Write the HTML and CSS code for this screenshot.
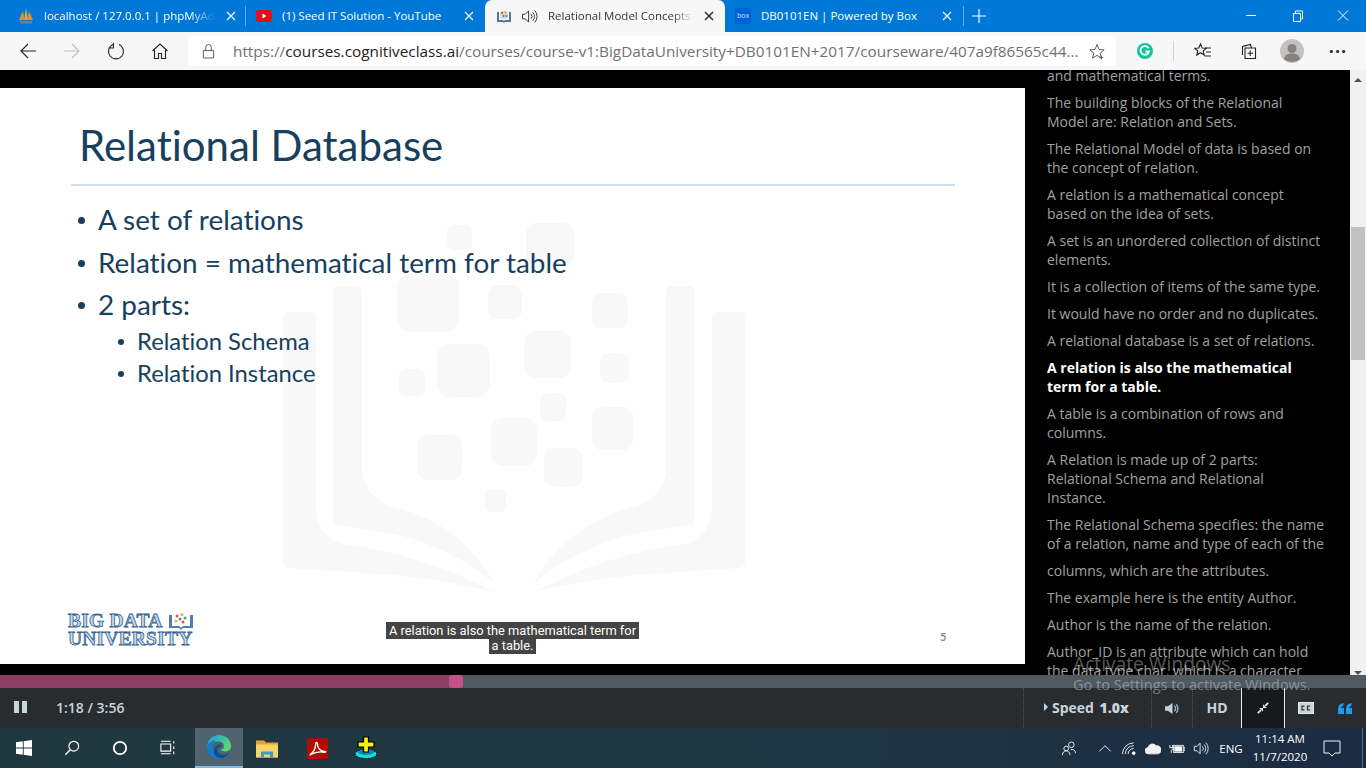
FILE: index.html
```html
<!DOCTYPE html>
<html lang="en">
<head>
    <meta charset="UTF-8">
    <title>Relational Model Concepts</title>
    <link rel="stylesheet" href="styles.css">
</head>
<body>

<!-- browser tabs -->
<div class="tabs">
    <div class="tab tab-first">
        <svg class="fav" viewBox="0 0 16 16"><path d="M1 12 5 3l1.500 9z" fill="#e8912c"/><path d="M6 12 8 0l2 12z" fill="#f0a030"/><path d="M9.500 12 11 3l4 9z" fill="#e8912c"/><rect x="2" y="13" width="12" height="2.500" fill="#6d7fa8"/></svg>
        <span class="tab-title fade">localhost / 127.0.0.1 | phpMyAdmin</span>
        <svg class="tab-x" viewBox="0 0 10 10"><path d="M1 1l8 8M9 1 1 9"/></svg>
    </div>
    <div class="tab tab-second">
        <svg class="fav" viewBox="0 0 16 16"><rect x="0" y="2" width="16" height="12" rx="3" fill="#e0101a"/><path d="M6.5 5.5 10.500 8l-4 2.500z" fill="#fff"/></svg>
        <span class="tab-title">(1) Seed IT Solution - YouTube</span>
        <svg class="tab-x" viewBox="0 0 10 10"><path d="M1 1l8 8M9 1 1 9"/></svg>
    </div>
    <div class="tab tab-active">
        <svg class="fav" viewBox="0 0 16 16"><path d="M1 4h2v8h4l1 1 1-1h4V4h2v10H9l-1 1-1-1H1z" fill="#54789c"/><rect x="4" y="3" width="8" height="8" rx="2" fill="#e8e2da"/><circle cx="6" cy="5" r="1.200" fill="#d9534f"/><circle cx="9.500" cy="4.500" r="1.200" fill="#e3b23c"/><circle cx="7.500" cy="8" r="1.200" fill="#3f8fc4"/><circle cx="10.500" cy="8" r="1.200" fill="#5aa55a"/></svg>
        <svg class="speaker" viewBox="0 0 18 16"><path d="M1.500 5.500h3L8 2v12l-3.500-3.500h-3z" fill="none" stroke="#333"/><path d="M10.500 5.500a3.500 3.500 0 0 1 0 5M12.500 3.500a6.500 6.500 0 0 1 0 9M14.500 1.500a9.500 9.500 0 0 1 0 13" fill="none" stroke="#333"/></svg>
        <span class="tab-title fade">Relational Model Concepts | Coursera</span>
        <svg class="tab-x" viewBox="0 0 10 10"><path d="M1 1l8 8M9 1 1 9"/></svg>
    </div>
    <div class="tab tab-last">
        <span class="box-logo">box</span>
        <span class="tab-title">DB0101EN | Powered by Box</span>
        <svg class="tab-x" viewBox="0 0 10 10"><path d="M1 1l8 8M9 1 1 9"/></svg>
    </div>
    <svg class="tab-plus" viewBox="0 0 14 14"><path d="M7 0v14M0 7h14"/></svg>
    <div class="win-btns">
        <svg viewBox="0 0 46 32"><path d="M18 15.500h10"/></svg>
        <svg viewBox="0 0 46 32"><path d="M19.500 13.500h7v8h-7zM21.500 13.500v-2.500h7v8h-2"/></svg>
        <svg viewBox="0 0 46 32"><path d="M18 10.500l10 10M28 10.500l-10 10"/></svg>
    </div>
</div>

<!-- address bar row -->
<div class="toolbar">
    <span class="tool"><svg viewBox="0 0 18 18"><path d="M17 9H2M9 2 2 9l7 7"/></svg></span>
    <span class="tool tool-off"><svg viewBox="0 0 18 18"><path d="M1 9h15M9 2l7 7-7 7"/></svg></span>
    <span class="tool"><svg viewBox="0 0 18 18"><path d="M6 2.500a7.500 7.500 0 1 0 6 0M6.500 1v5H1.500"/></svg></span>
    <span class="tool"><svg viewBox="0 0 18 18"><path d="M1.500 9 9 2l7.500 7M3.500 8v8.500h4v-5h3v5h4V8"/></svg></span>
    <div class="address">
        <svg class="lock" viewBox="0 0 14 16"><path d="M1.500 7.500h11v8h-11zM4 7.500V4a3 3 0 0 1 6 0v3.500"/></svg>
        <span class="url"><span class="url-dim">https://</span>courses.cognitiveclass.ai<span class="url-dim">/courses/course-v1:BigDataUniversity+DB0101EN+2017/courseware/407a9f86565c44...</span></span>
        <svg class="star" viewBox="0 0 18 18"><path d="M8.500 1.500 10.600 6.800l5.400.4-4.100 3.500 1.300 5.300-4.700-2.900-4.700 2.900 1.300-5.300L1 7.200l5.400-.4z"/><path d="M13 13.500v4M11 15.500h4"/></svg>
    </div>
    <span class="tool ext"><svg viewBox="0 0 18 18"><circle cx="9" cy="9" r="8" fill="#15c39a"/><path d="M12.500 6.200A4.300 4.300 0 1 0 13 9.500H9.500" fill="none" stroke="#fff" stroke-width="1.800"/></svg></span>
    <span class="tool-sep"></span>
    <span class="tool fav-btn"><svg viewBox="0 0 18 18"><path d="M6.500 2 8.200 6l4 .3-3 2.700 1 4-3.700-2.300L2.800 13l1-4-3-2.700 4-.3z" fill="none"/><path d="M11 6h6M12 10h5M10.500 14H17"/></svg></span>
    <span class="tool coll-btn"><svg viewBox="0 0 18 18"><path d="M3.500 13V4.500l8-2 .8 3M6 6h10.500v10.500H6zM11.200 8.500v5.500M8.500 11.200H14"/></svg></span>
    <span class="tool avatar"><svg viewBox="0 0 24 24"><circle cx="12" cy="12" r="12" fill="#c4c2be"/><circle cx="12" cy="9.500" r="4.500" fill="#858380"/><path d="M4 20c1-5 5-5.500 8-5.500s7 .5 8 5.500a12 12 0 0 1-16 0z" fill="#858380"/></svg></span>
    <span class="tool dots">&middot;&middot;&middot;</span>
</div>

<!-- video and transcript -->
<main class="player">
    <section class="stage">
        <div class="slide">
            <svg class="watermark" viewBox="0 88 1025 576">
                <g fill="#f8f8f8">
                    <rect x="447" y="225" width="25" height="25" rx="7"/>
                    <rect x="526" y="223" width="48" height="44" rx="11"/>
                    <rect x="397" y="274" width="62" height="58" rx="14"/>
                    <rect x="488" y="285" width="34" height="34" rx="9"/>
                    <rect x="592" y="293" width="36" height="35" rx="9"/>
                    <rect x="524" y="331" width="47" height="47" rx="12"/>
                    <rect x="437" y="344" width="53" height="53" rx="13"/>
                    <rect x="399" y="369" width="26" height="27" rx="7"/>
                    <rect x="600" y="353" width="29" height="30" rx="8"/>
                    <rect x="540" y="393" width="26" height="28" rx="7"/>
                    <rect x="592" y="407" width="41" height="43" rx="10"/>
                    <rect x="491" y="418" width="46" height="48" rx="12"/>
                    <rect x="417" y="435" width="45" height="45" rx="11"/>
                    <rect x="544" y="448" width="39" height="39" rx="10"/>
                    <rect x="485" y="489" width="21" height="23" rx="5"/>
                    <g id="bookLeft">
                        <path d="M333 292q0-6 6-6h17q6 0 6 6V470q2 26 28 36 70 16 104 77-42-36-104-50L339 525q-6-1-6-6z"/>
                        <path d="M283 318q0-6 6-6h21q6 0 6 6V510q2 26 26 34 80 10 152 48-50-12-100-17L289 568q-6-1-6-6z"/>
                    </g>
                    <use href="#bookLeft" transform="matrix(-1 0 0 1 1028 0)"/>
                </g>
            </svg>
            <h1 class="slide-title">Relational Database</h1>
            <ul class="points">
                <li>A set of relations</li>
                <li>Relation = mathematical term for table</li>
                <li>2 parts:
                    <ul class="subpoints">
                        <li>Relation Schema</li>
                        <li>Relation Instance</li>
                    </ul>
                </li>
            </ul>
            <div class="bdu-logo">
                <div class="bdu-row">BIG DATA
                    <svg class="bdu-book" viewBox="0 0 26 18"><path d="M1 3h3v11h7l2 2 2-2h7V3h3v13H15l-2 2-2-2H1z" fill="#4f80b0"/><circle cx="9" cy="4" r="1.500" fill="#d9534f"/><circle cx="14" cy="2.500" r="1.500" fill="#e3b23c"/><circle cx="17" cy="6" r="1.500" fill="#5aa55a"/><circle cx="12" cy="7" r="1.500" fill="#3f8fc4"/><circle cx="8" cy="9" r="1.500" fill="#e3b23c"/><circle cx="15" cy="10" r="1.500" fill="#d9534f"/></svg>
                </div>
                <div>UNIVERSITY</div>
            </div>
            <div class="caption"><span>A relation is also the mathematical term for a table.</span></div>
            <div class="page-no">5</div>
        </div>
    </section>
    <aside class="transcript">
        <div class="lines">
            <p>and mathematical terms.</p>
            <p>The building blocks of the Relational Model are: Relation and Sets.</p>
            <p>The Relational Model of data is based on the concept of relation.</p>
            <p>A relation is a mathematical concept based on the idea of sets.</p>
            <p>A set is an unordered collection of distinct elements.</p>
            <p>It is a collection of items of the same type.</p>
            <p>It would have no order and no duplicates.</p>
            <p>A relational database is a set of relations.</p>
            <p class="current">A relation is also the mathematical term for a table.</p>
            <p>A table is a combination of rows and columns.</p>
            <p>A Relation is made up of 2 parts: Relational Schema and Relational Instance.</p>
            <p>The Relational Schema specifies: the name of a relation, name and type of each of the</p>
            <p>columns, which are the attributes.</p>
            <p>The example here is the entity Author.</p>
            <p>Author is the name of the relation.</p>
            <p>Author_ID is an attribute which can hold the data type char, which is a character</p>
        </div>
    </aside>
    <div class="scrollbar">
        <span class="arrow-up"></span>
        <span class="thumb"></span>
        <span class="arrow-down"></span>
    </div>
</main>

<div class="progress">
    <span class="played"></span>
    <span class="handle"></span>
</div>

<div class="controls">
    <span class="pause"><i></i><i></i></span>
    <span class="time">1:18 / 3:56</span>
    <div class="ctl-right">
        <span class="ctl-speed"><i class="tri"></i>Speed <b>1.0x</b></span>
        <span class="ctl-vol"><svg viewBox="0 0 16 14"><path d="M0 4.500h3L8 1v12L3 9.500H0z" fill="#c4d0d8"/><path d="M10 4a4 4 0 0 1 0 6M12 2.500a6.500 6.500 0 0 1 0 9" fill="none" stroke="#9fb0bc" stroke-width="1.500"/></svg></span>
        <span class="ctl-hd">HD</span>
        <span class="ctl-full"><svg viewBox="0 0 14 14"><path d="M1 13l3.500-3.500M13 1 9.500 4.500" stroke="#dfe6ea" stroke-width="2.200"/><path d="M2.500 7h4.500v4.500zM11.500 7H7V2.500z" fill="#dfe6ea"/></svg></span>
        <span class="ctl-cc"><svg viewBox="0 0 16 12"><rect x="0.500" y="0.500" width="15" height="11" fill="#c9d4da" stroke="#e4eaee"/><path d="M6.500 4.200H4v3.600h2.500M12 4.200H9.500v3.600H12" fill="none" stroke="#30363a" stroke-width="1.300"/></svg></span>
        <span class="ctl-quote"><svg viewBox="0 0 14 11"><path d="M0 6q0-5 5.500-6v2.500Q3.500 3 3.300 5H6v6H0zM8 6q0-5 5.500-6v2.500Q11.500 3 11.300 5H14v6H8z" fill="#1e9ae8"/></svg></span>
    </div>
</div>

<!-- windows taskbar -->
<footer class="taskbar">
    <span class="task"><svg viewBox="0 0 16 16"><path d="M0 2.300 6.800 1.300v6.300H0zM7.700 1.200 16 0v7.600H7.700zM0 8.400h6.800v6.300L0 13.700zM7.700 8.400H16V16l-8.300-1.200z" fill="#fff"/></svg></span>
    <span class="task"><svg viewBox="0 0 18 18"><circle cx="11" cy="7" r="5.500" fill="none" stroke="#fff" stroke-width="1.300"/><path d="M7 11 1.500 16.500" stroke="#fff" stroke-width="1.500"/></svg></span>
    <span class="task"><svg viewBox="0 0 18 18"><circle cx="9" cy="9" r="7" fill="none" stroke="#fff" stroke-width="2"/></svg></span>
    <span class="task"><svg viewBox="0 0 18 18"><path d="M1 4.500h11v8H1zM1 1.500h11M1 15.500h11M15.500 1v3M15.500 7v3M15.500 13v3" fill="none" stroke="#fff" stroke-width="1.200"/></svg></span>
    <span class="task task-edge"><svg viewBox="0 0 24 24"><defs><linearGradient id="edgeTop" x1="0" y1="0" x2="1" y2="0.600"><stop offset="0" stop-color="#1b9de2"/><stop offset="1" stop-color="#5ad672"/></linearGradient></defs><path d="M12 0c7 0 12 5 12 11.500 0 3.500-3 5-6 5-2.500 0-4-1-4.500-2 2.500 0 3.500-2 3.500-3.500C17 8 14.500 6.500 11.500 6.500 6 6.500 1 10 0 13 0 5 5.500 0 12 0z" fill="url(#edgeTop)"/><path d="M0 12c0-4 4.500-6.500 9-6.500-3 1.500-4 5-3.500 8.500.7 5 4.500 8 9 9.500C7 25 0 20 0 12z" fill="#0f7ed0"/><path d="M7 16c0-4 3-6.500 6-6.500 1 0 1.500.5 1.500 1 0 2-4 1-4 5 0 3 4 5 8 4 1.500-.4 3-1.500 4-2.500-2 4-5.500 6.500-10 6C9 22.500 7 19.500 7 16z" fill="#0b4f9c"/></svg></span>
    <span class="task task-folder"><svg viewBox="0 0 22 18"><path d="M0 1h8l2 2h12v15H0z" fill="#e2a72e"/><rect y="5" width="22" height="13" fill="#f6d469"/><path d="M5 18v-6h12v6h-3v-3H8v3z" fill="#3f97d6"/></svg></span>
    <span class="task task-pdf"><svg viewBox="0 0 22 22"><rect width="22" height="22" rx="3" fill="#b30b00"/><path d="M3.500 17c3-1.500 5.500-6 5.500-10 0-3 2-3 2-.5 0 4 3 7.500 7.500 7.500 2 0 1 1.500-.5 1-4-1-8-1-14.500 2.500z" fill="none" stroke="#fff" stroke-width="1.400"/></svg></span>
    <span class="task task-plus"><svg viewBox="0 0 24 24"><ellipse cx="12" cy="18" rx="11" ry="4.500" fill="#16dbe8" stroke="#000" stroke-dasharray="2 1"/><ellipse cx="12" cy="16" rx="8" ry="3" fill="#0a8fa0"/><path d="M9.500 1h5v5H20v5h-5.500v5h-5v-5H4V6h5.500z" fill="#f8ee10" stroke="#000" stroke-width="1.200"/></svg></span>

    <div class="tray">
        <span class="tray-item tray-people"><svg viewBox="0 0 16 16"><circle cx="10.500" cy="4" r="3" /><circle cx="5" cy="8" r="2.500"/><path d="M1 15c0-3 2-4.500 4-4.500s4 1.500 4 4.500M10 9c2.500-.5 5 1 5 4"/></svg></span>
        <span class="tray-item tray-chev"><svg viewBox="0 0 16 16"><path d="M2 11l6-6 6 6"/></svg></span>
        <span class="tray-item"><svg viewBox="0 0 16 16"><path d="M1 14a12 12 0 0 1 12-12M4 14a9 9 0 0 1 9-9M7 14a6 6 0 0 1 6-6"/><circle cx="13" cy="13" r="1.500" fill="#fff"/></svg></span>
        <span class="tray-item"><svg viewBox="0 0 18 12"><path d="M4 12a3.500 3.500 0 0 1-.5-7A5 5 0 0 1 12.500 3 4.500 4.500 0 0 1 18 8c0 2.500-2 4-4 4z" fill="#f2f2f2"/></svg></span>
        <span class="tray-item"><svg viewBox="0 0 18 14"><path d="M5 3.500h11.500v8H5zM16.500 6h1.500v3h-1.500M1 3v3M4 3v3M0.500 6h4v2l-2 1v3"/><rect x="6.500" y="5" width="8" height="5" fill="#fff"/></svg></span>
        <span class="tray-item"><svg viewBox="0 0 18 16"><path d="M1.500 5.500h3L8 2v12l-3.500-3.500h-3zM10.500 5.500a3.500 3.500 0 0 1 0 5M12.500 3.500a6.500 6.500 0 0 1 0 9M14.500 1.500a9.500 9.500 0 0 1 0 13"/></svg></span>
        <span class="tray-lang">ENG</span>
        <span class="tray-clock">11:14 AM<br>11/7/2020</span>
        <span class="tray-item tray-note"><svg viewBox="0 0 18 18"><path d="M1 2h16v12h-5l-3 3-3-3H1z"/></svg></span>
        <span class="show-desktop"></span>
    </div>
</footer>

<!-- windows activation notice sits over everything -->
<div class="activate">
    <div class="activate-big">Activate Windows</div>
    <div class="activate-small">Go to Settings to activate Windows.</div>
</div>

</body>
</html>
```

FILE: styles.css
```css
* {
    box-sizing: border-box;
}
html, body {
    margin: 0;
    height: 768px;
    overflow: hidden;
}
body {
    position: relative;
    font-family: "Open Sans", "Noto Sans", sans-serif;
    background-color: #000;
}

/* tabs */
.tabs {
    display: flex;
    align-items: flex-start;
    height: 32px;
    padding-left: 8px;
    background-color: #0078d7;
    color: #fff;
    font-size: 11.5px;
}
.tab {
    display: flex;
    align-items: center;
    flex: none;
    height: 32px;
    padding: 0 8px 0 10px;
}
.tab-first {
    width: 238px;
}
.tab-first .tab-x {
    margin-right: 1px;
}
.tab-second {
    width: 239px;
}
.tab-active {
    width: 240px;
    padding-left: 11px;
    color: #333;
    background-color: #f7f7f7;
    border-radius: 7px 7px 0 0;
}
.tab-last {
    width: 239px;
}
.tab-first, .tab-last {
    height: 20px;
    margin-top: 6px;
    border-right: 1px solid #66aee7;
}
.fav {
    flex: none;
    width: 16px;
    height: 16px;
    margin-right: 10px;
}
.tab-active .fav {
    margin-right: 9px;
}
.speaker {
    flex: none;
    width: 17px;
    height: 15px;
    margin-right: 10px;
}
.box-logo {
    flex: none;
    width: 16px;
    height: 16px;
    margin-right: 10px;
    background-color: #0061d5;
    border-radius: 3px;
    color: #cfe3fb;
    font-size: 7px;
    line-height: 16px;
    text-align: center;
}
.tab-title {
    flex: 1;
    min-width: 0;
    margin-top: -2px;
    white-space: nowrap;
    overflow: hidden;
}
.fade {
    -webkit-mask-image: linear-gradient(to right, #000 85%, transparent);
    mask-image: linear-gradient(to right, #000 85%, transparent);
}
.tab-x {
    flex: none;
    width: 10px;
    height: 10px;
    margin: 0 3px 0 10px;
    stroke: #fff;
    stroke-width: 1.1;
    fill: none;
}
.tab-active .tab-x {
    stroke: #222;
    stroke-width: 1.400;
}
.tab-plus {
    flex: none;
    width: 14px;
    height: 14px;
    margin: 9px 0 0 8px;
    stroke: #fff;
    stroke-width: 1.100;
}
.win-btns {
    display: flex;
    margin-left: auto;
}
.win-btns svg {
    width: 46px;
    height: 32px;
    fill: none;
    stroke: #fff;
    stroke-width: 1;
}

/* address bar */
.toolbar {
    display: flex;
    align-items: center;
    height: 38px;
    padding-left: 6px;
    background-color: #f7f7f7;
}
.tool {
    display: flex;
    align-items: center;
    justify-content: center;
    flex: none;
    width: 44px;
    height: 38px;
}
.tool svg {
    width: 18px;
    height: 18px;
    fill: none;
    stroke: #222;
    stroke-width: 1.100;
}
.tool-off svg {
    stroke: #c0c0c0;
}
.address {
    display: flex;
    align-items: center;
    flex: none;
    width: 928px;
    height: 30px;
    margin-left: 6px;
    padding-left: 14px;
    background-color: #fff;
    border-radius: 4px;
}
.lock {
    flex: none;
    width: 13px;
    height: 16px;
    fill: none;
    stroke: #555;
    stroke-width: 1;
}
.url {
    flex: none;
    width: 852px;
    margin-left: 18px;
    font-size: 15.32px;
    white-space: nowrap;
    overflow: hidden;
    color: #222;
}
.url-dim {
    color: #707070;
}
.star {
    flex: none;
    width: 17px;
    height: 17px;
    margin-left: 4px;
    fill: none;
    stroke: #555;
    stroke-width: 1;
}
.ext {
    width: 46px;
    margin-left: 6px;
}
.ext svg {
    stroke: none;
}
.tool-sep {
    flex: none;
    width: 1px;
    height: 20px;
    margin: 0 6px 0 5px;
    background-color: #d2d2d2;
}
.fav-btn {
    width: 46px;
}
.avatar svg {
    width: 24px;
    height: 24px;
    stroke: none;
}
.dots {
    margin-left: 2px;
    font-size: 18px;
    font-weight: 700;
    letter-spacing: 1px;
    color: #333;
}

/* player */
.player {
    display: flex;
    height: 605px;
    background-color: #000;
}
.stage {
    flex: none;
    width: 1025px;
    padding-top: 18px;
}
.slide {
    position: relative;
    height: 576px;
    padding: 26px 0 0 71px;
    background-color: #fff;
    color: #17405f;
    font-family: Lato, "Open Sans", sans-serif;
    font-variant-ligatures: none;
}
.watermark {
    position: absolute;
    left: 0;
    top: 0;
    width: 1025px;
    height: 576px;
}
.slide-title {
    position: relative;
    width: 884px;
    margin: 0;
    padding: 0 0 7px 8px;
    border-bottom: 2px solid #c9e0f0;
    font-size: 42px;
    font-weight: 400;
    line-height: 63px;
}
.points {
    position: relative;
    margin: 0;
    padding: 12px 0 0 7px;
    font-size: 27.9px;
    line-height: 42.5px;
    list-style: none;
}
.subpoints {
    margin: -1px 0 0;
    padding: 0 0 0 34px;
    font-size: 23.8px;
    line-height: 32px;
    list-style: none;
}
.points li::before {
    content: "";
    display: inline-block;
    width: 7px;
    height: 7px;
    margin: 0 13px 6px 0;
    background-color: #17405f;
    border-radius: 50%;
}
.subpoints li::before {
    width: 6px;
    height: 6px;
    margin: 0 13px 5px 6px;
}
.bdu-logo {
    position: absolute;
    left: 68px;
    top: 524px;
    color: #c4dbef;
    font-family: "Liberation Serif", serif;
    font-size: 19.5px;
    font-weight: 700;
    line-height: 18px;
    letter-spacing: 0.2px;
    white-space: nowrap;
    -webkit-text-stroke: 0.8px #33608f;
}
.bdu-row {
    display: flex;
    align-items: center;
    gap: 5px;
}
.bdu-book {
    width: 26px;
    height: 18px;
}
.caption {
    position: absolute;
    left: 386px;
    top: 535px;
    width: 253px;
    color: #fff;
    font-family: Roboto, "Liberation Sans", sans-serif;
    font-size: 12.85px;
    line-height: 15px;
    text-align: center;
}
.caption span {
    padding: 1px 3px;
    background-color: #444;
    -webkit-box-decoration-break: clone;
    box-decoration-break: clone;
}
.page-no {
    position: absolute;
    left: 940px;
    top: 542px;
    color: #8d8d8d;
    font-size: 11px;
    font-weight: 700;
}

/* transcript on the right */
.transcript {
    flex: none;
    width: 325px;
    padding: 0 25px 0 22px;
    overflow: hidden;
    color: #a0a0a0;
    font-size: 14px;
    line-height: 19px;
}
.lines {
    margin-top: -4px;
}
.lines p {
    margin: 0 0 8px;
}
.lines .current {
    color: #fff;
    font-weight: 700;
}
.scrollbar {
    position: relative;
    flex: none;
    width: 16px;
    background-color: #f1f1f1;
}
.thumb {
    position: absolute;
    left: 1px;
    top: 157px;
    width: 14px;
    height: 133px;
    background-color: #c1c1c1;
}
.arrow-up, .arrow-down {
    position: absolute;
    left: 4px;
    border-left: 4px solid transparent;
    border-right: 4px solid transparent;
}
.arrow-up {
    top: 8px;
    border-bottom: 4px solid #505050;
}
.arrow-down {
    bottom: 0;
    border-top: 4px solid #505050;
}

/* seek bar */
.progress {
    position: relative;
    height: 13px;
    background-color: #4f5960;
}
.played {
    display: block;
    width: 449px;
    height: 13px;
    background-color: #8c3f62;
}
.handle {
    position: absolute;
    left: 449px;
    top: 0;
    width: 14px;
    height: 13px;
    background-color: #c2528a;
    border-radius: 3px;
}

/* player controls */
.controls {
    display: flex;
    align-items: center;
    height: 40px;
    padding-left: 14px;
    background-color: #282c2f;
    color: #c9d5dd;
    font-size: 14px;
    font-weight: 600;
}
.pause {
    display: flex;
    gap: 3px;
    margin-top: -2px;
}
.pause i {
    display: block;
    width: 5px;
    height: 12px;
    background-color: #c9d5dd;
}
.time {
    margin: -2px 0 0 29px;
}
.ctl-right {
    display: flex;
    align-items: center;
    height: 40px;
    margin-left: auto;
    padding-right: 3px;
    font-size: 14px;
    font-weight: 700;
}
.ctl-right > span {
    display: flex;
    align-items: center;
    height: 40px;
}
.ctl-speed {
    width: 129px;
    padding: 0 0 2px 20px;
    border-left: 1px dotted #4f565b;
    border-right: 1px dotted #4f565b;
    white-space: pre;
}
.ctl-speed b {
    margin-left: 2px;
}
.tri {
    width: 0;
    height: 0;
    margin-right: 4px;
    border-top: 4px solid transparent;
    border-bottom: 4px solid transparent;
    border-left: 4px solid #c9d5dd;
}
.ctl-vol {
    justify-content: center;
    width: 41px;
    border-right: 1px dotted #4f565b;
}
.ctl-vol svg {
    width: 15px;
    height: 13px;
}
.ctl-hd {
    justify-content: center;
    width: 48px;
    padding-bottom: 2px;
}
.ctl-full {
    justify-content: center;
    width: 44px;
    background-color: #17191a;
    border-left: 1px solid #e8e8e8;
    border-right: 1px solid #e8e8e8;
}
.ctl-full svg {
    width: 12px;
    height: 12px;
}
.ctl-cc {
    justify-content: center;
    width: 42px;
}
.ctl-cc svg {
    width: 16px;
    height: 12px;
}
.ctl-quote {
    justify-content: center;
    width: 36px;
}
.ctl-quote svg {
    width: 14px;
    height: 11px;
}

/* taskbar */
.taskbar {
    display: flex;
    align-items: center;
    height: 40px;
    background: linear-gradient(to right, #20383f, #1f3644 60%, #1b2b42);
    color: #fff;
}
.task {
    display: flex;
    align-items: center;
    justify-content: center;
    flex: none;
    width: 48px;
    height: 40px;
}
.task svg {
    width: 16px;
    height: 16px;
}
.task-edge {
    margin-left: 3px;
    background-color: #4f646e;
    border-bottom: 2px solid #76b9ed;
}
.task-edge svg {
    width: 24px;
    height: 24px;
}
.task-folder svg {
    width: 22px;
    height: 19px;
}
.task-pdf {
    margin: 0 1px 0 2px;
}
.task-pdf svg {
    width: 21px;
    height: 21px;
}
.task-plus svg {
    width: 24px;
    height: 24px;
}
.tray {
    display: flex;
    align-items: center;
    height: 40px;
    margin-left: auto;
    font-size: 11.5px;
}
.tray-item {
    display: flex;
    align-items: center;
    justify-content: center;
    flex: none;
    width: 24px;
    height: 40px;
}
.tray-item svg {
    width: 16px;
    height: 15px;
    fill: none;
    stroke: #f2f2f2;
    stroke-width: 1;
}
.tray-chev {
    margin-left: 12px;
}
.tray-lang {
    flex: none;
    width: 36px;
    text-align: center;
}
.tray-clock {
    flex: none;
    width: 62px;
    line-height: 18px;
    text-align: center;
}
.tray-note {
    width: 42px;
}
.tray-note svg {
    width: 18px;
    height: 18px;
}
.show-desktop {
    flex: none;
    width: 13px;
    height: 40px;
    border-right: 1px solid #5d6d78;
    transform: translateX(-3px);
}

/* activation watermark */
.activate {
    position: absolute;
    left: 1073px;
    top: 650px;
    color: rgba(255, 255, 255, 0.36);
    white-space: nowrap;
}
.activate-big {
    font-size: 19.2px;
    line-height: 27px;
}
.activate-small {
    font-size: 14.5px;
    line-height: 16px;
}
```
